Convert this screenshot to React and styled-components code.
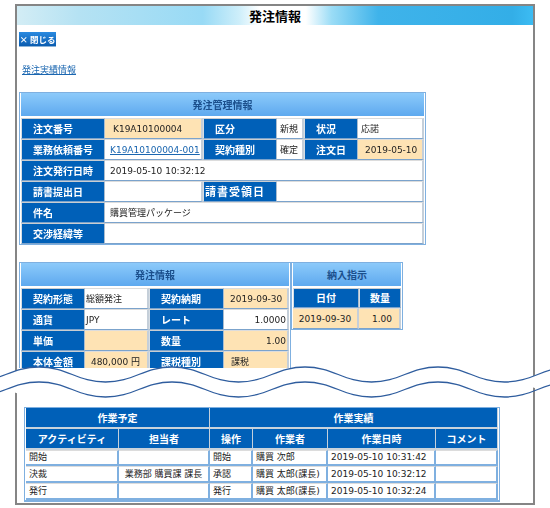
import React from 'react';
import styled, { createGlobalStyle } from 'styled-components';

const GlobalStyle = createGlobalStyle`
  html, body {
    margin: 0;
    background: #fff;
  }
`;

const latin = `"DejaVu Sans", "Noto Sans CJK JP", sans-serif`;
const jp = `"Noto Sans CJK JP", sans-serif`;

const Page = styled.div`
  position: relative;
  width: 550px;
  height: 508px;
  padding: 4px 0 0 15px;
  box-sizing: border-box;
  overflow: hidden;
  filter: blur(0.3px);
`;

const Frame = styled.div`
  width: 520px;
  height: 501px;
  box-sizing: border-box;
  border: 2px solid #858585;
  display: flex;
  flex-direction: column;
`;

const TitleBar = styled.h1`
  margin: 0;
  height: 19px;
  flex: none;
  font: bold 13px/19px ${jp};
  color: #000;
  text-align: center;
  background: linear-gradient(
    90deg,
    #d3edf5 0,
    #b5e2f3 12%,
    #98daf5 36%,
    #cdeefa 43%,
    #fff 47%,
    #fff 56%,
    #9adcf6 61%,
    #3fb3ea 70%,
    #33aee7 96%,
    #3cbcf3 100%
  );
`;

const TopSection = styled.div`
  height: 343px;
  flex: none;
  overflow: hidden;
  padding: 7px 0 0 2px;
  box-sizing: border-box;
`;

const CloseButton = styled.button`
  display: block;
  width: 37px;
  height: 15px;
  padding: 0;
  border: 0;
  border-bottom: 1px solid #8db4d8;
  background: linear-gradient(#2a8ae0, #0a5cb0);
  color: #fff;
  font: bold 8.5px/13px ${jp};
`;

const ResultLink = styled.a`
  display: block;
  margin: 17px 0 0 3px;
  height: 10px;
  font: 9px/12px ${jp};
  color: #1a66b0;
  text-decoration: underline;
`;

const Table = styled.table`
  table-layout: fixed;
  width: ${({ $w }) => $w}px;
  border-collapse: separate;
  border-spacing: 0;
  border: 1px solid #7fb0e0;
  padding: 0 1px 0 1px;
  box-sizing: border-box;
  background: #fff;
`;

const OrderTable = styled(Table)`
  margin-top: 18px;
`;

const TableRow = styled.div`
  display: flex;
  align-items: flex-start;
  margin-top: 17px;
`;

const Row = styled.tr`
  height: ${({ $h }) => $h || 21}px;
`;

const Heading = styled.th`
  height: 23px;
  padding: 0;
  border-bottom: 2px solid #fff;
  background: linear-gradient(#8ccafa, #5ea9ef);
  color: #1b4f8c;
  font: bold 10px/1 ${jp};
  text-align: center;
`;

const Label = styled.th`
  padding: 0 0 0 ${({ $pad }) => ($pad === undefined ? 11 : $pad)}px;
  box-sizing: border-box;
  border-top: 1px solid #c9cdd1;
  border-bottom: 1px solid #7ba3cc;
  border-right: 1px solid #a9bccf;
  border-left: 1px solid #d6dde4;
  background: #0060b8;
  color: #fff;
  font: bold ${({ $size }) => $size || 10}px/1 ${jp};
  letter-spacing: ${({ $spread }) => $spread || 0}px;
  text-align: ${({ $center }) => ($center ? 'center' : 'left')};
  white-space: nowrap;
`;

const Value = styled.td`
  padding: 1px ${({ $padR }) => $padR || 0}px 0 ${({ $pad }) => ($pad === undefined ? 5 : $pad)}px;
  box-sizing: border-box;
  border-top: 1px solid #dcdcdc;
  border-bottom: 1px solid #7ba3cc;
  border-right: 2px solid #c5cfd9;
  background: ${({ $tone }) => ($tone ? '#fee3b4' : '#fff')};
  color: #222;
  font: 9px/1 ${latin};
  text-align: ${({ $align }) => $align || 'left'};
  white-space: nowrap;
  overflow: hidden;
`;

const TicketLink = styled.a`
  color: #1a66b0;
  text-decoration: underline;
`;

const LowerSection = styled.div`
  flex: none;
  margin: 39px 0 0 7px;
`;

const HistoryTable = styled.table`
  table-layout: fixed;
  width: 476px;
  border-collapse: separate;
  border-spacing: 0;
  border: 1px solid #7fb0e0;
  border-width: 1px 1px 2px;
  padding: 0 1px;
  box-sizing: border-box;
  background: #fff;
`;

const HistoryHead = styled.th`
  padding: 0;
  box-sizing: border-box;
  border-bottom: 2px solid #c9d3dc;
  border-right: 1px solid #c3d0dc;
  background: #0060b8;
  color: #fff;
  font: bold 10px/1 ${jp};
  text-align: center;
`;

const HistoryCell = styled.td`
  padding: 0 0 0 ${({ $pad }) => ($pad === undefined ? 3 : $pad)}px;
  box-sizing: border-box;
  border-top: 1px solid #dcdcdc;
  border-bottom: 2px solid #7fb0e0;
  border-right: 2px solid #7fb0e0;
  color: #222;
  font: 9px/1 ${latin};
  text-align: ${({ $align }) => $align || 'left'};
  white-space: nowrap;
  overflow: hidden;
`;

const WaveOverlay = styled.svg`
  position: absolute;
  left: 0;
  top: 360px;
`;

const Widths = ({ list }) => (
  <colgroup>
    {list.map((w, i) => (
      <col key={i} width={w} />
    ))}
  </colgroup>
);

// one wave line, crest at y, trough at y + 15, period 133
const wavePoints = (y) => {
  let d = `M-94 ${y}`;
  for (let x = -94, i = 0; x < 600; x += 66.5, i++) {
    const from = i % 2 ? y + 15 : y;
    const to = i % 2 ? y : y + 15;
    d += ` C${x + 28} ${from} ${x + 38.5} ${to} ${x + 66.5} ${to}`;
  }
  return d;
};

const Wave = () => {
  const upper = wavePoints(7);
  const lower = wavePoints(22);
  // white strip between the two lines: the frame shows again under the lower one
  const lowerBack = [];
  for (let x = 571.5, i = 0; x > -94; x -= 66.5, i++) {
    const from = i % 2 ? 22 : 37;
    const to = i % 2 ? 37 : 22;
    lowerBack.push(`C${x - 28} ${from} ${x - 38.5} ${to} ${x - 66.5} ${to}`);
  }
  const strip = `${upper.split(' C').slice(0, 11).join(' C')} L571.5 37 ${lowerBack.join(' ')} Z`;
  return (
    <WaveOverlay width="550" height="44" viewBox="0 0 550 44">
      <path d={strip} fill="#fff" />
      <path d={upper} fill="none" stroke="#2f5d9e" strokeWidth="1.3" />
      <path d={lower} fill="none" stroke="#2f5d9e" strokeWidth="1.3" />
    </WaveOverlay>
  );
};

const history = [
  ['開始', '', '開始', '購買 次郎', '2019-05-10 10:31:42', 16],
  ['決裁', '業務部 購買課 課長', '承認', '購買 太郎(課長)', '2019-05-10 10:32:12', 17],
  ['発行', '', '発行', '購買 太郎(課長)', '2019-05-10 10:32:24', 17],
];

const App = () => (
  <Page>
    <GlobalStyle />
    <Frame>
      <TitleBar>発注情報</TitleBar>
      <TopSection>
        <CloseButton>× 閉じる</CloseButton>
        <ResultLink href="#">発注実績情報</ResultLink>

        <OrderTable $w={407}>
          <Widths list={[84, 98, 74, 27, 54, 66]} />
          <tbody>
            <tr>
              <Heading colSpan={6}>発注管理情報</Heading>
            </tr>
            <Row>
              <Label>注文番号</Label>
              <Value $tone $pad={8}>K19A10100004</Value>
              <Label>区分</Label>
              <Value $pad={3}>新規</Value>
              <Label>状況</Label>
              <Value $pad={3}>応諾</Value>
            </Row>
            <Row>
              <Label>業務依頼番号</Label>
              <Value><TicketLink href="#">K19A10100004-001</TicketLink></Value>
              <Label>契約種別</Label>
              <Value $pad={3}>確定</Value>
              <Label>注文日</Label>
              <Value $tone $pad={7}>2019-05-10</Value>
            </Row>
            <Row>
              <Label>注文発行日時</Label>
              <Value colSpan={5}>2019-05-10 10:32:12</Value>
            </Row>
            <Row>
              <Label>請書提出日</Label>
              <Value />
              <Label $pad={1} $size={11} $spread={1}>請書受領日</Label>
              <Value colSpan={3} />
            </Row>
            <Row>
              <Label>件名</Label>
              <Value colSpan={5}>購買管理パッケージ</Value>
            </Row>
            <Row>
              <Label>交渉経緯等</Label>
              <Value colSpan={5} />
            </Row>
          </tbody>
        </OrderTable>

        <TableRow>
          <Table $w={272}>
            <Widths list={[64, 64, 75, 65]} />
            <tbody>
              <tr>
                <Heading colSpan={4}>発注情報</Heading>
              </tr>
              <Row>
                <Label>契約形態</Label>
                <Value $pad={1}>総額発注</Value>
                <Label>契約納期</Label>
                <Value $tone $pad={6}>2019-09-30</Value>
              </Row>
              <Row>
                <Label>通貨</Label>
                <Value $pad={1}>JPY</Value>
                <Label>レート</Label>
                <Value $align="right" $padR={1}>1.0000</Value>
              </Row>
              <Row>
                <Label>単価</Label>
                <Value $tone />
                <Label>数量</Label>
                <Value $tone $align="right" $padR={1}>1.00</Value>
              </Row>
              <Row>
                <Label>本体金額</Label>
                <Value $tone $align="right" $padR={7}>480,000 円</Value>
                <Label>課税種別</Label>
                <Value $tone $pad={7}>課税</Value>
              </Row>
            </tbody>
          </Table>
          <Table $w={112}>
            <Widths list={[66, 42]} />
            <tbody>
              <tr>
                <Heading colSpan={2}>納入指示</Heading>
              </tr>
              <Row $h={20}>
                <Label $center $pad={0}>日付</Label>
                <Label $center $pad={0}>数量</Label>
              </Row>
              <Row>
                <Value $tone $pad={0} $align="center">2019-09-30</Value>
                <Value $tone $pad={0} $padR={7} $align="right">1.00</Value>
              </Row>
            </tbody>
          </Table>
        </TableRow>
      </TopSection>

      <LowerSection>
        <HistoryTable>
          <Widths list={[93, 91, 43, 75, 108, 62]} />
          <tbody>
            <Row>
              <HistoryHead colSpan={2}>作業予定</HistoryHead>
              <HistoryHead colSpan={4}>作業実績</HistoryHead>
            </Row>
            <Row>
              <HistoryHead>アクティビティ</HistoryHead>
              <HistoryHead>担当者</HistoryHead>
              <HistoryHead>操作</HistoryHead>
              <HistoryHead>作業者</HistoryHead>
              <HistoryHead>作業日時</HistoryHead>
              <HistoryHead>コメント</HistoryHead>
            </Row>
            {history.map(([activity, owner, action, worker, date, h]) => (
              <Row key={date} $h={h}>
                <HistoryCell>{activity}</HistoryCell>
                <HistoryCell $pad={0} $align="center">{owner}</HistoryCell>
                <HistoryCell>{action}</HistoryCell>
                <HistoryCell>{worker}</HistoryCell>
                <HistoryCell>{date}</HistoryCell>
                <HistoryCell />
              </Row>
            ))}
          </tbody>
        </HistoryTable>
      </LowerSection>
    </Frame>
    <Wave />
  </Page>
);

export default App;
